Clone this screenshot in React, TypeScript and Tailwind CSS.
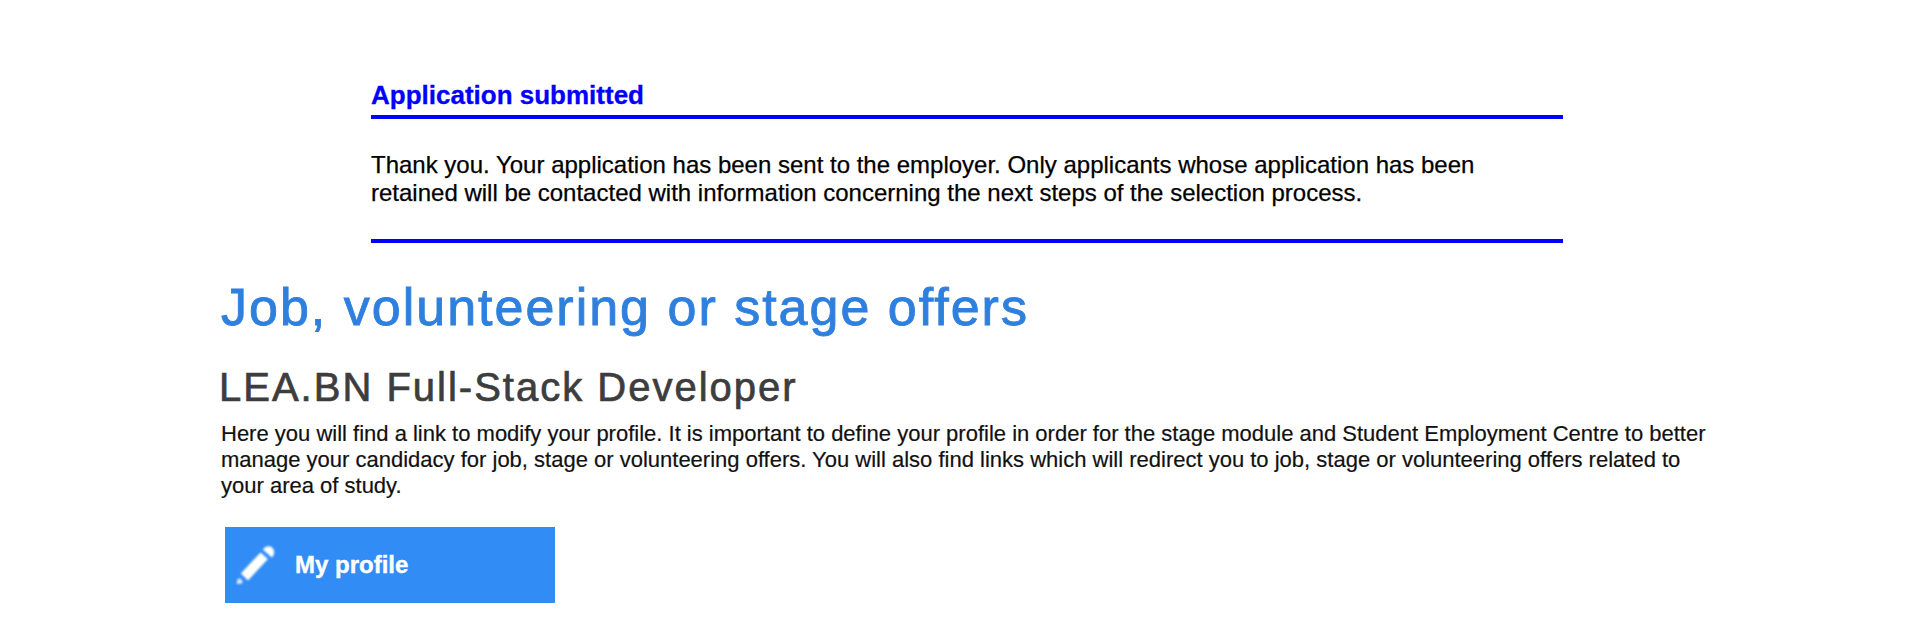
function PencilIcon() {
  return (
    <svg className="h-[46px] w-[46px] shrink-0 blur-[1px]" viewBox="0 0 46 46" fill="white" aria-hidden="true">
      <path d="M28.6 10.4L35.9 17L16 38.4L8.8 31.4Z" />
      <path d="M30.8 7.6C32.4 5.2 35 4 37.4 4.3C40.6 4.9 42.4 8 42.1 11C41.9 12.8 41 14.3 39.8 15.4Z" />
      <path d="M4.6 42L5.4 38C6.2 36.2 8 36.2 9.2 37.6C10.8 39.2 11.2 40.4 9.8 41.4Z" opacity="0.85" />
    </svg>
  );
}

export default function App() {
  return (
    <main className="h-[644px] w-[1916px] overflow-hidden bg-white font-['Liberation_Sans',Arial,sans-serif] text-black">
      <section className="ml-[371px] w-[1192px] pt-20">
        <h2 className="border-b-4 border-[#0000ff] pb-[5px] text-[26px] leading-[30px] font-bold whitespace-nowrap text-[#0000ff] [-webkit-text-stroke:0.3px_currentColor]">
          Application submitted
        </h2>
        <p className="border-b-4 border-[#0000ff] py-8 text-[24px] leading-[28px] whitespace-nowrap [-webkit-text-stroke:0.25px_currentColor]">
          Thank you. Your application has been sent to the employer. Only applicants whose application has been
          <br />
          retained will be contacted with information concerning the next steps of the selection process.
        </p>
      </section>
      <section className="ml-[221px] pt-8">
        <h1 className="text-[52px] leading-[64px] tracking-[2px] text-[#2f80de] [-webkit-text-stroke:0.9px_currentColor]">
          Job, volunteering or stage offers
        </h1>
        <h2 className="-ml-0.5 pt-[25px] text-[40px] leading-[46px] tracking-[2px] text-[#3d3d3d] [-webkit-text-stroke:0.7px_currentColor]">
          LEA.BN Full-Stack Developer
        </h2>
        <p className="pt-[11px] text-[22px] leading-[26px] whitespace-nowrap text-[#111111] [-webkit-text-stroke:0.2px_currentColor]">
          Here you will find a link to modify your profile. It is important to define your profile in order for the stage module and Student Employment Centre to better
          <br />
          manage your candidacy for job, stage or volunteering offers. You will also find links which will redirect you to job, stage or volunteering offers related to
          <br />
          your area of study.
        </p>
        <a href="#profile" className="mt-7 ml-1 flex h-[76px] w-[330px] items-center gap-[17px] bg-[#318cf6] pl-[7px] text-[24px] leading-[28px] font-bold text-white [-webkit-text-stroke:0.4px_currentColor]">
          <PencilIcon />
          <span>My profile</span>
        </a>
      </section>
    </main>
  );
}
